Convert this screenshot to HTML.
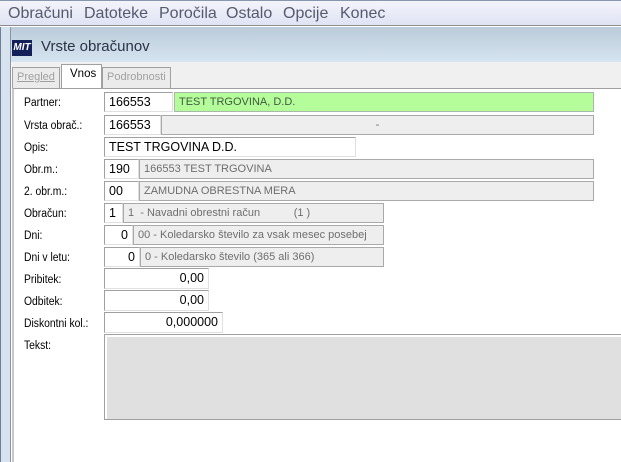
<!DOCTYPE html>
<html><head><style>
*{margin:0;padding:0;box-sizing:border-box}
body{width:621px;height:462px;overflow:hidden;background:#fff;position:relative;font-family:"Liberation Sans",sans-serif}
.a{position:absolute}
.menu{left:0;top:0;width:621px;height:26px;background:linear-gradient(#f4f4fb,#dfe3f3);border-top:1px solid #8a96ad;border-bottom:1px solid #8c8c8c;font-size:16px;color:#555a6e}
.menu span{position:absolute;top:4px}
.title{left:0;top:27px;width:621px;height:35px;background:linear-gradient(#bccbd9,#d6e4f1);}
.tabs{left:12px;top:62px;width:609px;height:26px;background:#f0f0f0}
.lf{left:0;top:27px;width:11px;height:435px;background:linear-gradient(90deg,#6d8098 0 1px,#d7e2ef 1px 10px,#8a94a0 10px)}
.lbl{font-size:11.5px;color:#000;left:24px;transform:scaleX(.9);transform-origin:left}
.in{background:#fff;border:1px solid #a0a0a0;border-right-color:#e0e0e0;border-bottom-color:#e0e0e0;font-size:12.5px;padding:2px 4px;line-height:14px;white-space:nowrap}
.g{background:#eeeeee;border:1px solid #a9a9a9;color:#6e6e6e;font-size:11px;padding:2px 4px;line-height:14px;white-space:nowrap}
.r{text-align:right}
.tab{font-size:11px;top:67px;height:21px;border:1px solid #a0a0a0;border-bottom:none;background:#ebebeb;color:#a0a0a0;padding:3px 4px}
</style></head><body>
<div class="a menu"><span style="left:8px">Obračuni</span><span style="left:84px">Datoteke</span><span style="left:159px">Poročila</span><span style="left:226px">Ostalo</span><span style="left:283px">Opcije</span><span style="left:340px">Konec</span></div>
<div class="a title"></div>
<div class="a" style="left:12px;top:40px;width:20px;height:16px;background:#14205a;color:#fff;font-size:10px;font-weight:bold;font-style:italic;line-height:16px;text-align:center">MIT</div>
<div class="a" style="left:41px;top:38px;font-size:15px;color:#2a3245">Vrste obračunov</div>
<div class="a lf"></div>
<div class="a tabs"></div>
<div class="a tab" style="left:12px;width:48px;text-decoration:underline">Pregled</div>
<div class="a tab" style="left:102px;width:69px">Podrobnosti</div>
<div class="a" style="left:61px;top:64px;width:41px;height:25px;background:#fff;border:1px solid #a0a0a0;border-bottom:none;font-size:11.5px;padding:3px 0 0 8px">Vnos</div>
<div class="a" style="left:12px;top:88px;width:609px;height:374px;border-top:1px solid #a0a0a0;border-left:2px solid #c8c8c8"></div>

<div class="a lbl" style="top:97px">Partner:</div>
<div class="a in" style="left:104px;top:92px;width:69px;height:20px">166553</div>
<div class="a" style="left:174px;top:92px;width:420px;height:20px;background:#b5fd9a;border:1px solid #a9b9a9;font-size:11px;color:#3f5a3f;padding:2px 4px;line-height:14px">TEST TRGOVINA, D.D.</div>

<div class="a lbl" style="top:120px">Vrsta obrač.:</div>
<div class="a in" style="left:104px;top:115px;width:57px;height:20px">166553</div>
<div class="a g" style="left:161px;top:115px;width:433px;height:20px;text-align:center">-</div>

<div class="a lbl" style="top:142px">Opis:</div>
<div class="a in" style="left:104px;top:137px;width:252px;height:20px">TEST TRGOVINA D.D.</div>

<div class="a lbl" style="top:164px">Obr.m.:</div>
<div class="a in" style="left:104px;top:159px;width:35px;height:20px">190</div>
<div class="a g" style="left:139px;top:159px;width:455px;height:20px">166553 TEST TRGOVINA</div>

<div class="a lbl" style="top:186px">2. obr.m.:</div>
<div class="a in" style="left:104px;top:181px;width:35px;height:20px">00</div>
<div class="a g" style="left:139px;top:181px;width:455px;height:20px">ZAMUDNA OBRESTNA MERA</div>

<div class="a lbl" style="top:208px">Obračun:</div>
<div class="a in" style="left:104px;top:203px;width:19px;height:20px">1</div>
<div class="a g" style="left:123px;top:203px;width:261px;height:20px">1&nbsp; - Navadni obrestni račun&nbsp;&nbsp;&nbsp;&nbsp;&nbsp;&nbsp;&nbsp;&nbsp;&nbsp;&nbsp; (1 )</div>

<div class="a lbl" style="top:230px">Dni:</div>
<div class="a in r" style="left:104px;top:225px;width:29px;height:20px">0</div>
<div class="a g" style="left:133px;top:225px;width:251px;height:20px">00 - Koledarsko število za vsak mesec posebej</div>

<div class="a lbl" style="top:252px">Dni v letu:</div>
<div class="a in r" style="left:104px;top:247px;width:36px;height:20px">0</div>
<div class="a g" style="left:140px;top:247px;width:244px;height:20px">0 - Koledarsko število (365 ali 366)</div>

<div class="a lbl" style="top:274px">Pribitek:</div>
<div class="a in r" style="left:104px;top:268px;width:105px;height:21px">0,00</div>
<div class="a lbl" style="top:296px">Odbitek:</div>
<div class="a in r" style="left:104px;top:290px;width:105px;height:21px">0,00</div>
<div class="a lbl" style="top:318px">Diskontni kol.:</div>
<div class="a in r" style="left:104px;top:312px;width:119px;height:21px">0,000000</div>
<div class="a lbl" style="top:340px">Tekst:</div>
<div class="a" style="left:104px;top:334px;width:517px;height:86px;background:#e0e0e0;border:1px solid #a0a0a0;border-right:none;box-shadow:inset 2px 2px 0 #fff"></div>
</body></html>
